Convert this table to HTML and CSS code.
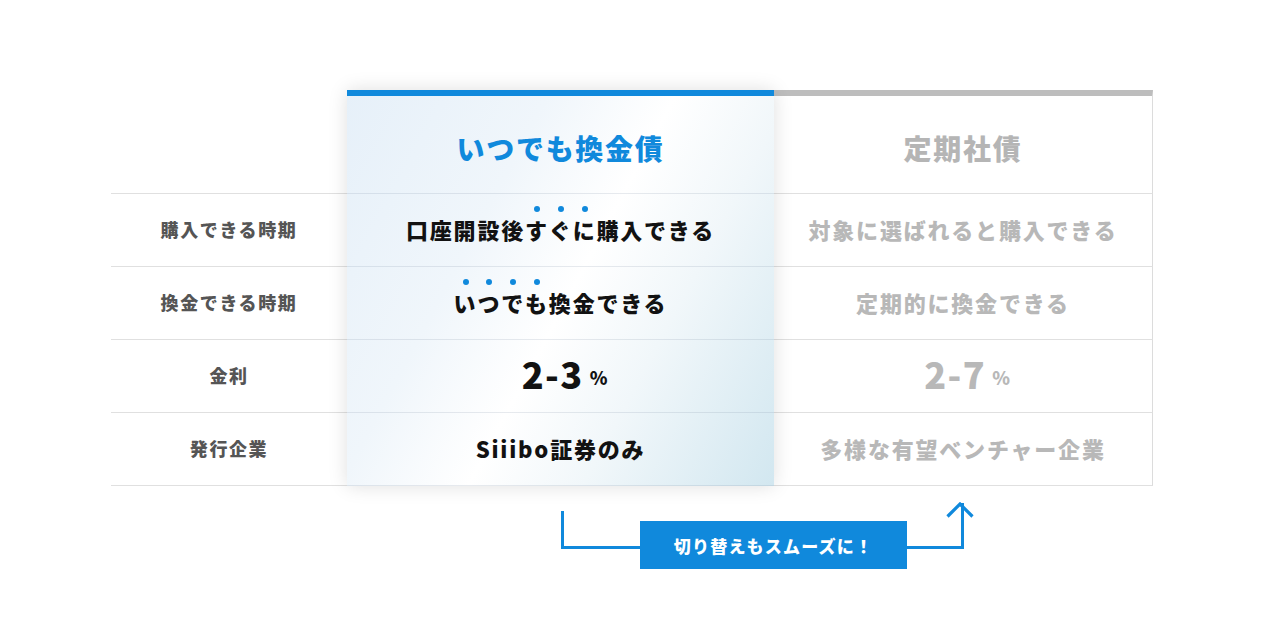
FILE: index.html
```html
<!DOCTYPE html>
<html lang="ja">
<head>
<meta charset="utf-8">
<title>いつでも換金債と定期社債の比較</title>
<link rel="stylesheet" href="styles.css">
</head>
<body>
<div class="page">
  <div class="compare">
    <div class="col col-label">
      <div class="head"></div>
      <div class="cell">購入できる時期</div>
      <div class="cell">換金できる時期</div>
      <div class="cell">金利</div>
      <div class="cell">発行企業</div>
    </div>
    <div class="col col-main">
      <div class="head">いつでも換金債</div>
      <div class="cell"><span>口座開設後<span class="em">す</span><span class="em">ぐ</span><span class="em">に</span>購入できる</span></div>
      <div class="cell"><span><span class="em">い</span><span class="em">つ</span><span class="em">で</span><span class="em">も</span>換金できる</span></div>
      <div class="cell"><span class="rate">2-3</span><span class="pct">%</span></div>
      <div class="cell">Siiibo証券のみ</div>
    </div>
    <div class="col col-alt">
      <div class="head">定期社債</div>
      <div class="cell">対象に選ばれると購入できる</div>
      <div class="cell">定期的に換金できる</div>
      <div class="cell"><span class="rate">2-7</span><span class="pct">%</span></div>
      <div class="cell">多様な有望ベンチャー企業</div>
    </div>
  </div>
  <div class="switch">
    <div class="seg-left"></div>
    <div class="badge">切り替えもスムーズに！</div>
    <div class="seg-right">
      <svg class="arrow" width="28" height="16" viewBox="0 0 28 16"><path d="M1.5 14.5 L14 2 L26.5 14.5" fill="none" stroke="#1089dc" stroke-width="3.2"/></svg>
    </div>
  </div>
</div>
</body>
</html>
```

FILE: styles.css
```css
html, body {
  margin: 0;
  padding: 0;
  background: #ffffff;
}

body {
  font-family: "Noto Sans CJK JP", "Noto Sans", sans-serif;
  font-weight: 900;
}

.page {
  padding: 90px 0 0 111px;
}

.compare {
  display: flex;
  width: 1042px;
}

.col {
  display: flex;
  flex-direction: column;
}

.head {
  height: 103px;
  box-sizing: border-box;
  display: flex;
  align-items: center;
  justify-content: center;
  padding-top: 6px;
  font-size: 28px;
  letter-spacing: 1.7px;
}

.cell {
  height: 73px;
  box-sizing: border-box;
  border-top: 1px solid #e0e0e0;
  padding-bottom: 3px;
  display: flex;
  align-items: center;
  justify-content: center;
  font-size: 22px;
  letter-spacing: 1.8px;
}

.cell:last-child {
  height: 74px;
  border-bottom: 1px solid #e0e0e0;
}

/* label column */
.col-label {
  width: 236px;
}

.col-label .cell {
  font-size: 18px;
  color: #555555;
  letter-spacing: 1.6px;
  padding-bottom: 2px;
}

/* highlighted column */
.col-main {
  width: 427px;
  position: relative;
  z-index: 1;
  background: linear-gradient(118deg, #e6f0f9 0%, #f0f6fb 32%, #ffffff 52%, #f1f7fa 70%, #d2e7f0 100%);
  box-shadow: 0 0 18px rgba(0, 0, 0, 0.13);
}

.col-main .head {
  border-top: 6px solid #1089dc;
  color: #1089dc;
}

.col-main .cell {
  color: #121212;
  border-color: rgba(120, 140, 160, 0.18);
}

.em {
  position: relative;
}

.em::before {
  content: "";
  position: absolute;
  top: -7px;
  left: 50%;
  width: 6px;
  height: 6px;
  margin-left: -3px;
  border-radius: 50%;
  background: #1089dc;
}

.rate {
  font-size: 36px;
  letter-spacing: 1.5px;
  margin-left: 10px;
  margin-bottom: 4px;
}

.pct {
  font-size: 18px;
  margin-left: 6px;
  margin-top: 5px;
}

/* other column */
.col-alt {
  width: 379px;
}

.col-alt .head {
  border-top: 6px solid #bdbdbd;
  border-right: 1px solid #dcdcdc;
  color: #b5b5b5;
}

.col-alt .cell {
  color: #b8b8b8;
  border-right: 1px solid #dcdcdc;
}

/* connector */
.switch {
  display: flex;
  align-items: flex-start;
  margin: 17px 0 0 450px;
}

.seg-left {
  width: 79px;
  height: 38px;
  margin-top: 8px;
  box-sizing: border-box;
  border-left: 3px solid #1089dc;
  border-bottom: 3px solid #1089dc;
}

.badge {
  width: 267px;
  height: 48px;
  margin-top: 18px;
  background: #1089dc;
  color: #ffffff;
  font-size: 17px;
  letter-spacing: 1.2px;
  display: flex;
  align-items: center;
  justify-content: center;
}

.seg-right {
  width: 57px;
  height: 46px;
  box-sizing: border-box;
  border-right: 3px solid #1089dc;
  border-bottom: 3px solid #1089dc;
  position: relative;
}

.arrow {
  position: absolute;
  top: -1px;
  right: -12.5px;
}
```
